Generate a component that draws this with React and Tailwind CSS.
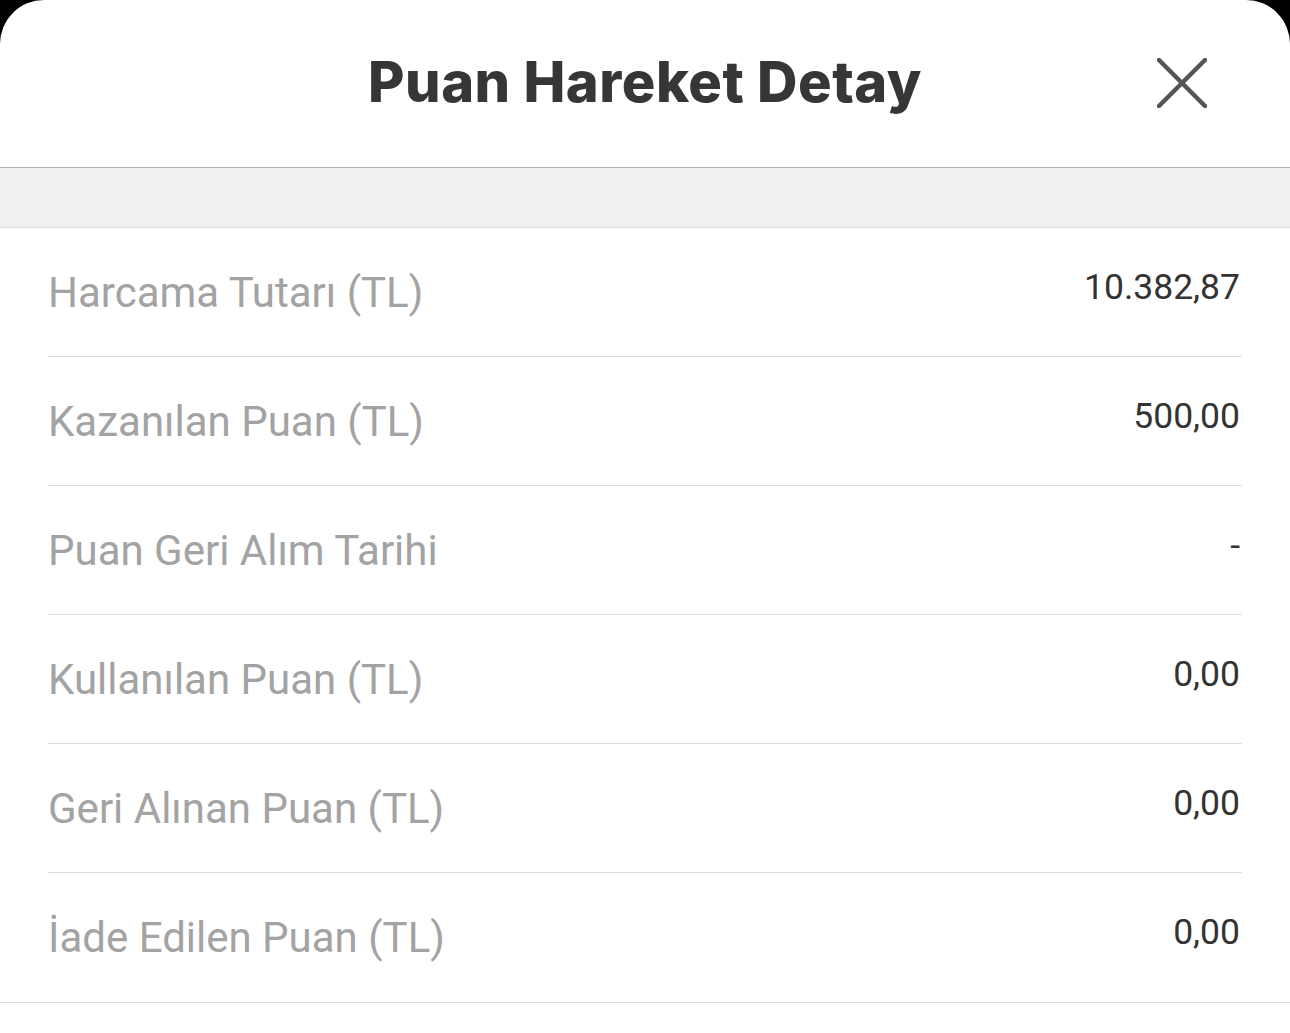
const rows = [
  { label: 'Harcama Tutarı (TL)', value: '10.382,87' },
  { label: 'Kazanılan Puan (TL)', value: '500,00' },
  { label: 'Puan Geri Alım Tarihi', value: '-' },
  { label: 'Kullanılan Puan (TL)', value: '0,00' },
  { label: 'Geri Alınan Puan (TL)', value: '0,00' },
  { label: 'İade Edilen Puan (TL)', value: '0,00' },
]

export default function App() {
  return (
    <div className="min-h-[1033px] w-[1290px] bg-black">
      <div className="bg-white rounded-t-[44px] min-h-[1033px] overflow-hidden">
        <div className="relative h-[168px] flex items-center justify-center border-b border-[#b3b3b3]">
          <h1
            className="text-[56px] font-extrabold text-[#363636] tracking-[0.5px] -mt-[4px]"
            style={{ fontFamily: 'Inter, sans-serif' }}
          >
            Puan Hareket Detay
          </h1>
          <button className="absolute right-[82px] top-[57px] w-[52px] h-[52px] flex items-center justify-center">
            <svg width="50" height="50" viewBox="0 0 50 50" fill="none">
              <path d="M2 2 L48 48 M48 2 L2 48" stroke="#555555" strokeWidth="4.5" strokeLinecap="round" />
            </svg>
          </button>
        </div>
        <div className="h-[60px] bg-[#f1f0ef] border-b border-[#dedede]" />
        <div style={{ fontFamily: 'Roboto, sans-serif' }}>
          {rows.map((r, i) => (
            <Row key={r.label} {...r} last={i === rows.length - 1} />
          ))}
        </div>
      </div>
    </div>
  )
}

function Row({ label, value, last }) {
  return (
    <div className={last ? 'border-b border-[#dedede]' : ''}>
      <div
        className={
          'mx-[48px] h-[129px] flex justify-between items-center ' +
          (last ? '' : 'border-b border-[#dedede]')
        }
      >
        <span className="text-[42px] text-[#a3a3a3] pt-[0px]">{label}</span>
        <span className="text-[35.5px] text-[#333333] pr-[2px] -mt-[9px]">{value}</span>
      </div>
    </div>
  )
}
